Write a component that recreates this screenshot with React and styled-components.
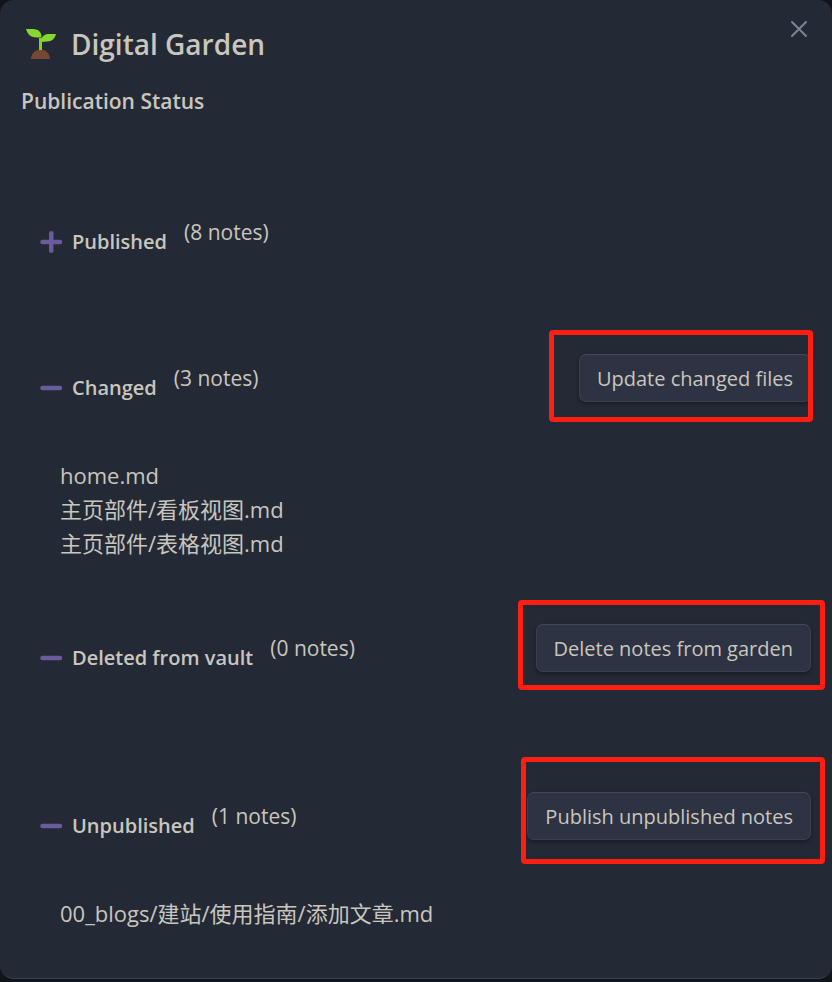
import React, { useState } from "react";
import styled, { createGlobalStyle } from "styled-components";

const GlobalStyle = createGlobalStyle`
  *, *::before, *::after { box-sizing: border-box; }
  body {
    margin: 0;
    background: #12141c;
    color: #c9c6be;
    font-family: "Open Sans", "Noto Sans CJK SC", sans-serif;
    font-size: 22px;
    line-height: 34px;
  }
`;

const Dialog = styled.main`
  position: relative;
  padding: 24px 21px 48px;
  background: #242936;
  border-bottom: 1px solid #374151;
  border-radius: 14px;
`;

const CloseButton = styled.button`
  position: absolute;
  top: 16px;
  right: 20px;
  display: flex;
  padding: 4px;
  border: 0;
  background: none;
  color: #7f8494;
  cursor: pointer;
`;

const Title = styled.h1`
  display: flex;
  align-items: center;
  gap: 14px;
  margin: 0;
  padding-left: 4px;
  font-size: 28px;
  font-weight: 600;
  line-height: 40px;
`;

const Subtitle = styled.h2`
  margin: 20px 0 90px;
  font-size: 21px;
  font-weight: 600;
  line-height: 34px;
`;

const Section = styled.section`
  padding-left: 18px;
  margin-bottom: ${(p) => (p.$open ? 64 : 98)}px;

  &:last-child { margin-bottom: 0; }
`;

const SectionHeader = styled.div`
  display: flex;
  align-items: center;
  height: 48px;
`;

const Toggle = styled.button`
  display: flex;
  align-items: center;
  gap: 9px;
  margin-top: 20px;
  padding: 0;
  border: 0;
  background: none;
  color: inherit;
  font: inherit;
  font-size: 20px;
  font-weight: 600;
  white-space: nowrap;
  cursor: pointer;
`;

const Count = styled.span`
  margin-left: 17px;
  font-size: 21px;
  white-space: nowrap;
`;

const Action = styled.div`
  position: relative;
  margin-left: auto;
`;

const ActionButton = styled.button`
  display: block;
  height: 48px;
  padding: 2px 17px 0;
  border: 1px solid #3a4050;
  border-top-color: #43495a;
  border-radius: 7px;
  background: #2d3343;
  box-shadow: 0 2px 4px rgba(0, 0, 0, 0.35);
  color: inherit;
  font: inherit;
  font-size: 20px;
  white-space: nowrap;
  cursor: pointer;
`;

const Highlight = styled.span`
  position: absolute;
  inset: ${(p) => p.$inset};
  border: 5px solid #ff1e12;
  border-radius: 4px;
  pointer-events: none;
`;

const FileList = styled.ul`
  margin: 0;
  padding: 56px 0 0 21px;
  list-style: none;
  font-weight: 400;
`;

const SproutIcon = () => (
  <svg width="32" height="32" viewBox="0 0 32 32" aria-hidden="true">
    <path d="M6 31c0-5 4-9.500 9.500-9.500S25 26 25 31z" fill="#764834" />
    <path d="M14 22V10h3v12z" fill="#7fcf2d" />
    <path d="M1 1h7c6 0 8.500 3.500 8.500 8.500H12C5.500 9.500 2.500 6 1 1z" fill="#86d72f" />
    <path d="M16 14c0-5.500 3.500-8 8-8h7c-1 4.500-4 7.500-9 7.500z" fill="#86d72f" />
  </svg>
);

const ToggleIcon = ({ open }) => (
  <svg width="24" height="24" viewBox="0 0 24 24" fill="none" stroke="#6a5b9f" strokeWidth="4.500" strokeLinecap="round" aria-hidden="true">
    <path d="M3.500 12h17.500" />
    {!open && <path d="M12.250 3.250v17.500" />}
  </svg>
);

const CloseIcon = () => (
  <svg width="18" height="18" viewBox="0 0 18 18" fill="none" stroke="currentColor" strokeWidth="2" strokeLinecap="round" aria-hidden="true">
    <path d="M2 2l14 14M16 2L2 16" />
  </svg>
);

const groups = [
  { name: "Published", count: 8, open: false, files: [] },
  {
    name: "Changed",
    count: 3,
    open: true,
    files: ["home.md", "主页部件/看板视图.md", "主页部件/表格视图.md"],
    action: "Update changed files",
    inset: "-24px -2px -20px -30px",
  },
  {
    name: "Deleted from vault",
    count: 0,
    open: true,
    files: [],
    action: "Delete notes from garden",
    inset: "-24px -14px -18px -18px",
  },
  {
    name: "Unpublished",
    count: 1,
    open: true,
    files: ["00_blogs/建站/使用指南/添加文章.md"],
    action: "Publish unpublished notes",
    inset: "-35px -14px -24px -6px",
  },
];

function NoteGroup({ group }) {
  const [open, setOpen] = useState(group.open);
  return (
    <Section $open={open}>
      <SectionHeader>
        <Toggle type="button" aria-expanded={open} onClick={() => setOpen(!open)}>
          <ToggleIcon open={open} />
          {group.name}
        </Toggle>
        <Count>({group.count} notes)</Count>
        {group.action && (
          <Action>
            <ActionButton type="button">{group.action}</ActionButton>
            <Highlight $inset={group.inset} />
          </Action>
        )}
      </SectionHeader>
      {open && (
        <FileList>
          {group.files.map((file) => (
            <li key={file}>{file}</li>
          ))}
        </FileList>
      )}
    </Section>
  );
}

export default function App() {
  return (
    <>
      <GlobalStyle />
      <Dialog>
        <CloseButton type="button" aria-label="Close">
          <CloseIcon />
        </CloseButton>
        <Title>
          <SproutIcon />
          Digital Garden
        </Title>
        <Subtitle>Publication Status</Subtitle>
        {groups.map((group) => (
          <NoteGroup key={group.name} group={group} />
        ))}
      </Dialog>
    </>
  );
}
